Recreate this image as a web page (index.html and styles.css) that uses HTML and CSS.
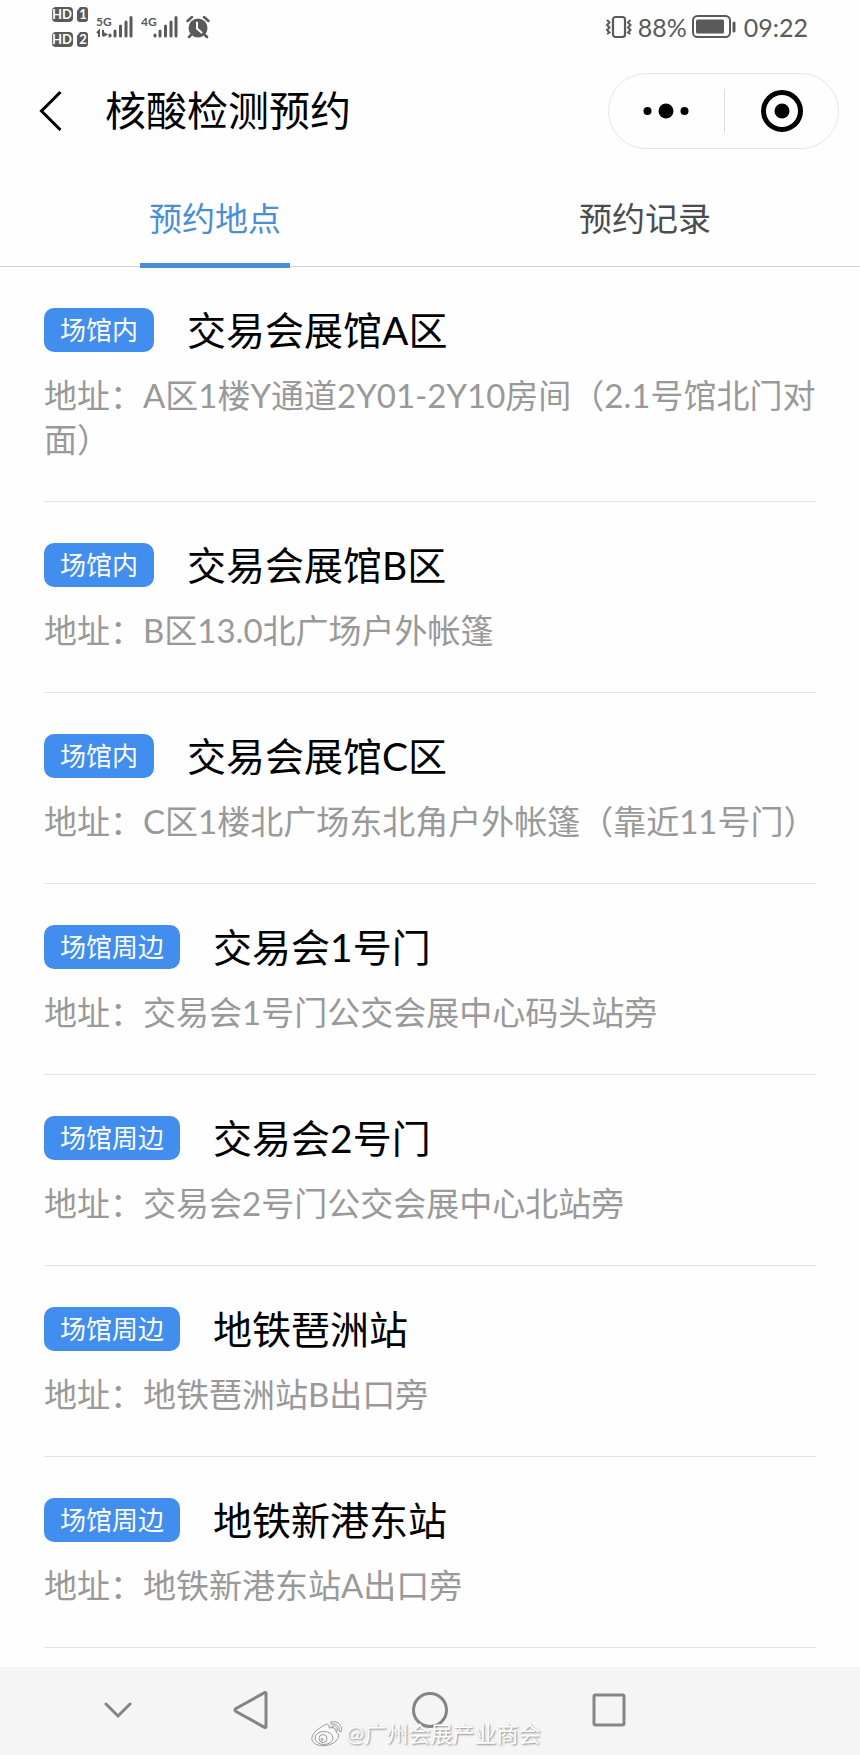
FILE: index.html
```html
<!DOCTYPE html>
<html lang="zh-CN">
<head>
  <title>核酸检测预约</title>
  <meta charset="utf-8" />
  <meta name="viewport" content="width=device-width, initial-scale=1.0">
  <link rel="stylesheet" href="styles.css">
</head>
<body>

  <!-- Phone status bar -->
  <div class="status-bar">
    <div class="status-left">
      <svg class="icon-hd" width="36" height="42" viewBox="0 0 36 42">
        <rect x="0" y="1" width="21" height="15" rx="4" />
        <path d="M28 1h5q3 0 3 3v9q0 3-3 3h-5q-3 0-3-3v-8z" />
        <rect x="0" y="26" width="21" height="15" rx="4" />
        <path d="M28 26h5q3 0 3 3v9q0 3-3 3h-5q-3 0-3-3v-8z" />
        <text x="10" y="13" font-size="13">HD</text>
        <text x="31" y="13" font-size="13">1</text>
        <text x="10" y="38" font-size="13">HD</text>
        <text x="31" y="38" font-size="13">2</text>
      </svg>
      <svg class="icon-signal" width="37" height="24" viewBox="0 0 37 24">
        <text x="0" y="11" font-size="12">5G</text>
        <path class="data" d="M1 18l2-2v6M7 15v6M7 18l3 1.500l-3 1.500" />
        <path class="bars" d="M14 20v1M19 16v5M24.500 11v10M30 7v14M35 2.500v18.500" />
      </svg>
      <svg class="icon-signal" width="37" height="24" viewBox="0 0 37 24">
        <text x="0" y="11" font-size="12">4G</text>
        <path class="bars" d="M14 20v1M19 16v5M24.500 11v10M30 7v14M35 2.500v18.500" />
      </svg>
      <svg width="24" height="24" viewBox="0 0 24 24">
        <circle cx="12" cy="13" r="9.500" fill="#5a5a5a" />
        <path d="M1.500 6L6 2M22.500 6L18 2M5 20l-2 2M19 20l2 2" stroke="#5a5a5a" stroke-width="2.500" stroke-linecap="round" />
        <path d="M11 7.500v6l4.500 4" fill="none" stroke="#fff" stroke-width="2" stroke-linecap="round" />
      </svg>
    </div>
    <div class="status-right">
      <svg width="28" height="24" viewBox="0 0 28 24" fill="none" stroke="#5a5a5a">
        <rect x="8" y="2" width="12" height="20" rx="2.500" stroke-width="2.200" />
        <path d="M2 5l2.500 2.500L2 10l2.500 2.500L2 15l2.500 2.500L2 19M25.500 5L23 7.500L25.500 10L23 12.500L25.500 15L23 17.500L25.500 19" stroke-width="2" />
      </svg>
      <span class="percent">88%</span>
      <svg class="icon-battery" width="44" height="24" viewBox="0 0 44 24">
        <rect x="1" y="1" width="37" height="21" rx="4.500" fill="none" stroke="#5a5a5a" stroke-width="2" />
        <rect x="4" y="4.500" width="28" height="14" rx="1.500" fill="#5a5a5a" />
        <path d="M42 8v8" stroke="#5a5a5a" stroke-width="3" stroke-linecap="round" />
      </svg>
      <span>09:22</span>
    </div>
  </div>

  <header class="header">
    <button class="back" aria-label="返回">
      <svg width="24" height="42" viewBox="0 0 24 42">
        <path d="M21.500 2L2.500 21L21.500 40" fill="none" stroke="#000" stroke-width="3" />
      </svg>
    </button>
    <h1>核酸检测预约</h1>
    <div class="capsule">
      <button aria-label="更多">
        <svg width="46" height="16" viewBox="0 0 46 16">
          <circle cx="4.500" cy="8" r="4" />
          <circle cx="23" cy="8" r="7.500" />
          <circle cx="41.500" cy="8" r="4" />
        </svg>
      </button>
      <button aria-label="关闭">
        <svg width="44" height="44" viewBox="0 0 44 44">
          <circle cx="23" cy="22" r="18.500" fill="none" stroke="#000" stroke-width="5" />
          <circle cx="23" cy="22" r="7.500" />
        </svg>
      </button>
    </div>
  </header>

  <nav class="tabs">
    <a href="#places" class="tab active">预约地点</a>
    <a href="#records" class="tab">预约记录</a>
  </nav>

  <ul class="places" id="places">
    <li class="place">
      <div class="place-title"><span class="tag">场馆内</span><h2>交易会展馆A区</h2></div>
      <p>地址：A区1楼Y通道2Y01-2Y10房间（2.1号馆北门对面）</p>
    </li>
    <li class="place">
      <div class="place-title"><span class="tag">场馆内</span><h2>交易会展馆B区</h2></div>
      <p>地址：B区13.0北广场户外帐篷</p>
    </li>
    <li class="place">
      <div class="place-title"><span class="tag">场馆内</span><h2>交易会展馆C区</h2></div>
      <p>地址：C区1楼北广场东北角户外帐篷（靠近11号门）</p>
    </li>
    <li class="place">
      <div class="place-title"><span class="tag">场馆周边</span><h2>交易会1号门</h2></div>
      <p>地址：交易会1号门公交会展中心码头站旁</p>
    </li>
    <li class="place">
      <div class="place-title"><span class="tag">场馆周边</span><h2>交易会2号门</h2></div>
      <p>地址：交易会2号门公交会展中心北站旁</p>
    </li>
    <li class="place">
      <div class="place-title"><span class="tag">场馆周边</span><h2>地铁琶洲站</h2></div>
      <p>地址：地铁琶洲站B出口旁</p>
    </li>
    <li class="place">
      <div class="place-title"><span class="tag">场馆周边</span><h2>地铁新港东站</h2></div>
      <p>地址：地铁新港东站A出口旁</p>
    </li>
  </ul>

  <!-- System navigation keys -->
  <footer class="system-nav">
    <button class="key-hide" aria-label="收起">
      <svg width="28" height="18" viewBox="0 0 28 18"><path d="M2 3l12 12L26 3" /></svg>
    </button>
    <button aria-label="后退">
      <svg width="36" height="38" viewBox="0 0 36 38"><path d="M33 2.500v33q0 1.500-1.500 .8L3 20.500q-2-1.500 0-3L31.500 1.700q1.500-.7 1.500 .8z" /></svg>
    </button>
    <button aria-label="主页">
      <svg width="36" height="36" viewBox="0 0 36 36"><circle cx="18" cy="18" r="16.500" /></svg>
    </button>
    <button aria-label="最近任务">
      <svg width="34" height="34" viewBox="0 0 34 34"><rect x="2" y="2" width="30" height="30" rx="1.500" /></svg>
    </button>
    <div class="watermark">
      <svg width="34" height="28" viewBox="0 0 34 28">
        <path d="M13 6c4-3 7-2 6 2c5-1 8 0 7 4c4 2 3 6 0 9c-7 7-22 6-24-1c-1-5 4-10 11-14z" />
        <ellipse cx="14" cy="18" rx="9" ry="6.500" />
        <circle cx="13" cy="18.500" r="4" />
        <circle cx="12" cy="19.500" r="1" />
        <path d="M21 2c7-2 12 4 10 10l-2-1c1-5-3-8-8-7zM22 6c4-1 6 2 5 5l-2-1c0-2-1-3-3-2z" />
      </svg>
      <span>@广州会展产业商会</span>
    </div>
  </footer>

</body>
</html>
```
FILE: styles.css
```css
* {
  box-sizing: border-box;
}

body {
  margin: 0;
  min-height: 100vh;
  display: flex;
  flex-direction: column;
  background-color: #fefefe;
  color: #000;
  font-family: Lato, "Noto Sans CJK SC", sans-serif;
}

button {
  display: flex;
  align-items: center;
  justify-content: center;
  padding: 0;
  border: none;
  background: none;
}

svg {
  display: block;
  flex: none;
}

h1, h2, p {
  margin: 0;
  font-weight: 400;
}

/* Status bar */

.status-bar {
  display: flex;
  justify-content: space-between;
  height: 54px;
  padding: 0 52px;
  color: #5a5a5a;
  font-size: 25px;
}

.status-left,
.status-right {
  display: flex;
  align-items: center;
}

.status-left {
  gap: 8px;
}

.icon-hd {
  fill: #5a5a5a;
}

.icon-hd text {
  fill: #fff;
  font-weight: 700;
  text-anchor: middle;
}

.icon-signal {
  fill: #5a5a5a;
}

.icon-signal text {
  font-weight: 700;
}

.icon-signal path {
  fill: none;
  stroke: #5a5a5a;
}

.icon-signal .bars {
  stroke-width: 3;
  stroke-linecap: round;
}

.icon-signal .data {
  stroke-width: 2;
}

.percent {
  margin: 0 5px;
}

.icon-battery {
  margin-right: 8px;
}

/* Header */

.header {
  display: flex;
  align-items: center;
  height: 114px;
  padding: 0 21px 0 39px;
}

.header h1 {
  margin-left: 42px;
  font-size: 41px;
  line-height: 60px;
}

.capsule {
  display: flex;
  width: 231px;
  height: 76px;
  margin-left: auto;
  border: 1px solid #e6e6e6;
  border-radius: 38px;
}

.capsule button {
  position: relative;
  flex: 1;
}

.capsule button + button::before {
  content: "";
  position: absolute;
  left: 0;
  top: 15px;
  bottom: 15px;
  border-left: 1px solid #ddd;
}

/* Tabs */

.tabs {
  display: flex;
  height: 99px;
  border-bottom: 1px solid #d2d2d2;
}

.tab {
  position: relative;
  flex: 1;
  padding-top: 26px;
  color: #4c4c4c;
  font-size: 33px;
  line-height: 48px;
  text-align: center;
  text-decoration: none;
}

.tab.active {
  color: #4a8fd6;
}

.tab.active::after {
  content: "";
  position: absolute;
  left: 50%;
  bottom: -2px;
  width: 150px;
  height: 5px;
  margin-left: -75px;
  background-color: #4a8fd6;
}

/* Place list */

.places {
  margin: 0;
  padding: 0 44px 19px;
  list-style: none;
}

.place {
  padding: 38px 0 40px;
  border-bottom: 1px solid #e4e4e4;
}

.place-title {
  display: flex;
  align-items: center;
  gap: 33px;
  margin-bottom: 18px;
}

.place h2 {
  font-size: 39px;
  line-height: 50px;
}

.place p {
  color: #999;
  font-size: 33px;
  line-height: 44px;
}

.tag {
  padding: 0 16px;
  border-radius: 10px;
  background-color: #418eee;
  color: #fff;
  font-size: 26px;
  line-height: 44px;
}

/* System navigation */

.system-nav {
  position: relative;
  display: grid;
  grid-template-columns: 1fr repeat(3, minmax(0, 179px)) 1fr;
  align-items: center;
  height: 88px;
  margin-top: auto;
  padding-bottom: 2px;
  background-color: #f5f5f5;
}

.system-nav button svg {
  fill: none;
  stroke: #858585;
  stroke-width: 3;
  stroke-linecap: round;
}

.key-hide {
  justify-self: end;
  width: 88px;
}

.watermark {
  position: absolute;
  left: 310px;
  bottom: 5px;
  display: flex;
  align-items: center;
  gap: 2px;
  color: #fff;
  font-size: 22px;
  line-height: 32px;
  text-shadow: 1px 1px 2px #888;
}

.watermark svg {
  fill: #fafafa;
  stroke: #999;
}
```
